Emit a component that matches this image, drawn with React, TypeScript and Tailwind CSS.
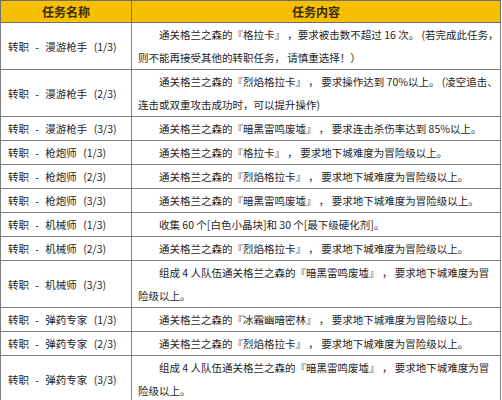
import React from "react";

type Row = {
  name: string;
  lines: string[];
};

const rows: Row[] = [
  {
    name: "转职 - 漫游枪手 (1/3)",
    lines: [
      "通关格兰之森的『格拉卡』 ，要求被击数不超过 16 次。 (若完成此任务，",
      "则不能再接受其他的转职任务， 请慎重选择！）",
    ],
  },
  {
    name: "转职 - 漫游枪手 (2/3)",
    lines: [
      "通关格兰之森的『烈焰格拉卡』 ， 要求操作达到 70%以上。 (凌空追击、",
      "连击或双重攻击成功时，可以提升操作)",
    ],
  },
  {
    name: "转职 - 漫游枪手 (3/3)",
    lines: ["通关格兰之森的『暗黑雷鸣废墟』 ， 要求连击杀伤率达到 85%以上。"],
  },
  {
    name: "转职 - 枪炮师 (1/3)",
    lines: ["通关格兰之森的『格拉卡』 ， 要求地下城难度为冒险级以上。"],
  },
  {
    name: "转职 - 枪炮师 (2/3)",
    lines: ["通关格兰之森的『烈焰格拉卡』 ， 要求地下城难度为冒险级以上。"],
  },
  {
    name: "转职 - 枪炮师 (3/3)",
    lines: ["通关格兰之森的『暗黑雷鸣废墟』 ， 要求地下城难度为冒险级以上。"],
  },
  {
    name: "转职 - 机械师 (1/3)",
    lines: ["收集 60 个[白色小晶块]和 30 个[最下级硬化剂]。"],
  },
  {
    name: "转职 - 机械师 (2/3)",
    lines: ["通关格兰之森的『烈焰格拉卡』 ， 要求地下城难度为冒险级以上。"],
  },
  {
    name: "转职 - 机械师 (3/3)",
    lines: [
      "组成 4 人队伍通关格兰之森的『暗黑雷鸣废墟』 ， 要求地下城难度为冒",
      "险级以上。",
    ],
  },
  {
    name: "转职 - 弹药专家 (1/3)",
    lines: ["通关格兰之森的『冰霜幽暗密林』 ， 要求地下城难度为冒险级以上。"],
  },
  {
    name: "转职 - 弹药专家 (2/3)",
    lines: ["通关格兰之森的『烈焰格拉卡』 ， 要求地下城难度为冒险级以上。"],
  },
  {
    name: "转职 - 弹药专家 (3/3)",
    lines: [
      "组成 4 人队伍通关格兰之森的『暗黑雷鸣废墟』 ， 要求地下城难度为冒",
      "险级以上。",
    ],
  },
];

const App: React.FC = () => {
  return (
    <div
      className="w-[502px] h-[400px] overflow-hidden bg-white text-[#1e1e1e]"
      style={{ fontFamily: '"Noto Sans CJK SC", "Noto Sans", sans-serif' }}
    >
      <table className="w-[501px] border-collapse table-fixed">
        <colgroup>
          <col className="w-[131px]" />
          <col />
        </colgroup>
        <thead>
          <tr className="h-[22px] bg-[#f6c000]">
            <th className="border border-[#6f6f6f] text-[12px] font-bold text-[#3b2a00]">
              任务名称
            </th>
            <th className="border border-[#6f6f6f] text-[12px] font-bold text-[#3b2a00]">
              任务内容
            </th>
          </tr>
        </thead>
        <tbody>
          {rows.map((row) => (
            <tr
              key={row.name}
              className={row.lines.length > 1 ? "h-[47px]" : "h-[24px]"}
            >
              <td className="border border-[#7d7d7d] pl-[7px] text-[10.5px] leading-[23px] whitespace-nowrap [word-spacing:4px]">
                {row.name}
              </td>
              <td className="border border-[#7d7d7d] pl-[6px] text-[10.5px] leading-[23px] whitespace-nowrap">
                {row.lines.map((line, i) => (
                  <div key={i} className={i === 0 ? "pl-[21px]" : ""}>
                    {line}
                  </div>
                ))}
              </td>
            </tr>
          ))}
        </tbody>
      </table>
    </div>
  );
};

export default App;
